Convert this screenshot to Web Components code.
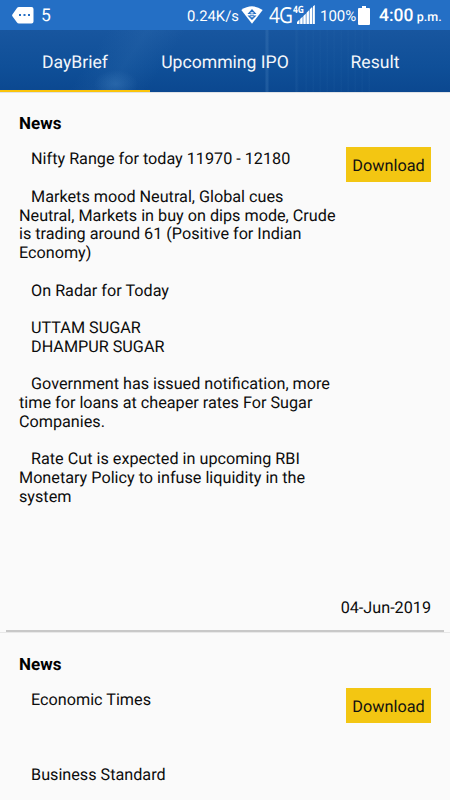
<!DOCTYPE html>
<html lang="en">
<head>
<meta charset="utf-8">
<title>DayBrief</title>
<style>
body {
  margin: 0;
  height: 800px;
  overflow: hidden;
  background: #fafafa;
  font-family: Roboto, sans-serif;
  text-rendering: geometricPrecision;
}
</style>
</head>
<body>
<brief-app></brief-app>

<script>
var define = function(name, markup) {
  var template = document.createElement("template");
  template.innerHTML = markup;
  customElements.define(name, class extends HTMLElement {
    constructor() {
      super();
      this.attachShadow({ mode: "open" }).appendChild(template.content.cloneNode(true));
    }
  });
};

define("status-bar", `
<style>
:host {
  display: flex;
  align-items: center;
  box-sizing: border-box;
  height: 30px;
  padding: 0 9px 0 12px;
  background: #246fc5;
  color: #fff;
  font-size: 15px;
  white-space: nowrap;
}
svg { display: block; flex: none; }
.count { width: 12px; margin: 2px 0 0 7px; font-size: 17.5px; }
.speed { width: 52px; margin: 1px 0 0 auto; font-size: 14.8px; }
.wifi { margin: 0 0 0 2px; }
.net { width: 23px; margin-left: 6px; font: 22px/33px "Open Sans", sans-serif; letter-spacing: -1px; transform: scaleX(.87); transform-origin: 0 0; }
.signal { display: flex; flex: none; position: relative; width: 24px; height: 30px; }
.signal svg { margin-top: 5px; }
.small { position: absolute; left: 1px; top: 3px; font: 700 10px/12px "Open Sans", sans-serif; transform: scaleX(.85); transform-origin: 0 0; }
.percent { width: 35px; margin: 1px 0 0 4px; }
.battery { margin-left: 3px; }
.time { width: 62px; margin: 1px 0 0 9px; font-size: 17.5px; font-weight: 500; }
.time span { margin-left: -1px; font-size: 12.5px; }
</style>
<svg width="22" height="17" viewBox="0 0 22 17">
  <path d="M7 0h12.5Q21.5 0 21.5 2v12.5q0 2-2 2H7q-1.4 0-2.2-1.2L.4 9.2q-.6-.9 0-1.8L4.8 1.2Q5.6 0 7 0z" fill="#fff"/>
  <path d="M7 7h2v2H7zM11.5 7h2v2h-2zM16 7h2v2h-2z" fill="#246fc5"/>
</svg>
<span class="count">5</span>
<span class="speed">0.24K/s</span>
<svg class="wifi" width="22" height="18" viewBox="0 0 22 18">
  <path d="M.3 4Q11-3.5 21.7 4L11 17.7z" fill="#fff"/>
  <path d="M11 3l4.5 5h-2.500v1.500h2.500L11 14 6.500 9.500H9V8H6.500z" fill="#246fc5"/>
  <path d="M9.600 6.300h2.800v1.200H9.600zM9 8.300h4v1H9zM9.600 10.200h2.800v1H9.600z" fill="#fff"/>
</svg>
<span class="net">4G</span>
<span class="signal">
  <svg width="24" height="20" viewBox="0 0 24 20" fill="#fff">
    <path d="M5 17l2.300-2.200V19H5zM8.200 14l2.300-2.200V19H8.200zM11.400 11l2.300-2.200V19h-2.300zM14.600 7.700l2.300-2.500V19h-2.300zM17.800 4.300l2.300-2.300V19h-2.300zM21 1.200L22.800 0v19H21z"/>
    <path d="M5 17L22.800.5V19H5z" opacity=".3"/>
  </svg>
  <span class="small">4G</span>
</span>
<span class="percent">100%</span>
<svg class="battery" width="12" height="19" viewBox="0 0 12 19">
  <path d="M4 0h4v2h3q1 0 1 1v15q0 1-1 1H1q-1 0-1-1V3q0-1 1-1h3z" fill="#fff"/>
</svg>
<span class="time">4:00 <span>p.m.</span></span>
`);

define("tab-bar", `
<style>
:host {
  display: flex;
  box-sizing: border-box;
  height: 63px;
  border-bottom: 1px solid #dfe2e6;
  background:
    radial-gradient(ellipse 22px 14px at 116px 54px, rgba(70,133,195,.38), transparent),
    linear-gradient(123deg, transparent 22%, rgba(54,116,181,.22) 30%, transparent 38%),
    linear-gradient(90deg, transparent 265px, rgba(71,128,188,.3) 266px, rgba(71,128,188,.3) 268px, transparent 269px, transparent 295px, rgba(42,102,167,.3) 296px, transparent 299px),
    repeating-linear-gradient(90deg, transparent 0 5px, rgba(44,107,170,.1) 6px 7px) 300px 0 / 70px 100% no-repeat,
    linear-gradient(#18569f, #0f4f98 60%, #0b4890);
}
</style>
<slot></slot>
`);

define("tab-item", `
<style>
:host {
  display: flex;
  flex: 1;
  align-items: center;
  justify-content: center;
  box-sizing: border-box;
  height: 62px;
  padding-top: 5px;
  border-bottom: 2px solid transparent;
  color: #f3f6fa;
  font-size: 17.6px;
}
:host([selected]) { border-color: #fbc40b; }
</style>
<slot></slot>
`);

define("download-button", `
<style>
:host { display: block; flex: none; }
button {
  display: block;
  width: 85px;
  height: 35px;
  padding: 1px 0 0;
  border: 0;
  background: #f3c612;
  color: #111;
  font: 16.3px/35px Roboto, sans-serif;
  text-rendering: inherit;
}
</style>
<button><slot></slot></button>
`);

define("news-card", `
<style>
:host {
  display: block;
  padding: 21.4px 19px 0;
  color: #0c0c0c;
  font-size: 16.2px;
  line-height: 18.75px;
}
h2 { margin: 0 0 16px; font-size: 17px; line-height: 20px; font-weight: 700; color: #000; }
.row { display: flex; justify-content: space-between; align-items: flex-start; }
.text { width: 325px; margin-right: -325px; white-space: pre; }
download-button { margin: -3.4px 0 0 auto; }
.date { margin-top: 92.6px; text-align: right; }
</style>
<h2>News</h2>
<div class="row">
  <div class="text"><slot></slot></div>
  <download-button>Download</download-button>
</div>
<div class="date"><slot name="date"></slot></div>
`);

define("list-divider", `
<style>
:host { display: block; height: 2px; margin: 12px 0 .6px; padding: 0 6px; border-bottom: 1px solid #e8e8e8; }
div { height: 2px; background: #c8c8c8; }
</style>
<div></div>
`);

define("brief-app", `
<style>
:host { display: block; height: 800px; overflow: hidden; background: #fafafa; }
</style>
<status-bar></status-bar>
<tab-bar>
  <tab-item selected>DayBrief</tab-item>
  <tab-item>Upcomming IPO</tab-item>
  <tab-item>Result</tab-item>
</tab-bar>
<news-card>   Nifty Range for today 11970 - 12180

   Markets mood Neutral, Global cues
Neutral, Markets in buy on dips mode, Crude
is trading around 61 (Positive for Indian
Economy)

   On Radar for Today

   UTTAM SUGAR
   DHAMPUR SUGAR

   Government has issued notification, more
time for loans at cheaper rates For Sugar
Companies.

   Rate Cut is expected in upcoming RBI
Monetary Policy to infuse liquidity in the
system<span slot="date">04-Jun-2019</span></news-card>
<list-divider></list-divider>
<news-card>   Economic Times



   Business Standard</news-card>
`);
</script>
</body>
</html>
